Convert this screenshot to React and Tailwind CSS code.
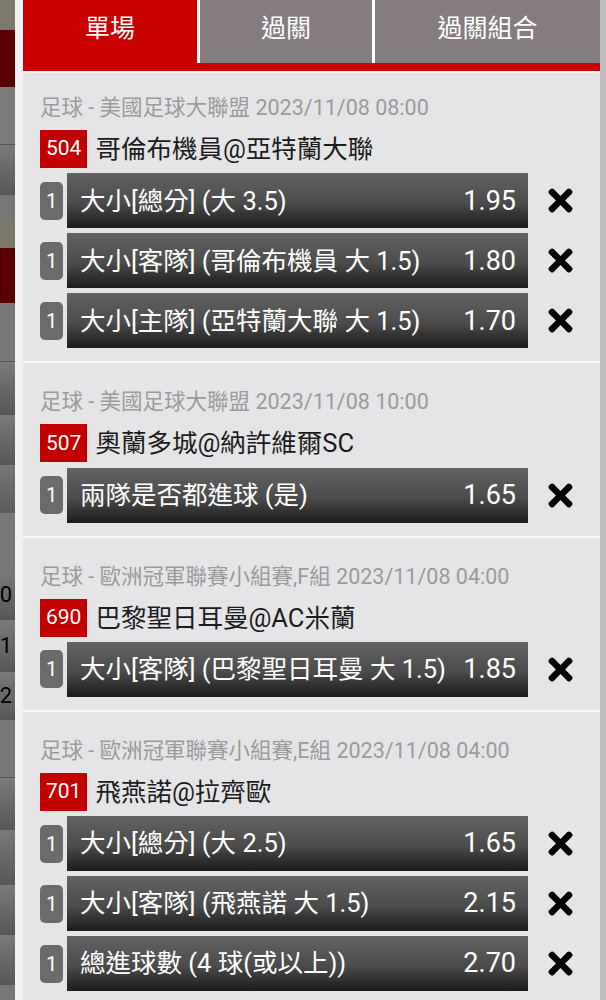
import React from 'react';
import { FaTimes } from 'react-icons/fa';

const sideRows = [
  { h: 'h-[30px]', bg: 'bg-[#7d7a6c]' },
  { h: 'h-[57px]', bg: 'bg-[#5a0202]' },
  { h: 'h-[58px]', bg: 'bg-[#7b7b7b] border-b border-[#555]' },
  { h: 'h-[50px]', bg: 'bg-linear-to-b from-[#7a7a7a] to-[#575757]' },
  { h: 'h-[23px]', bg: 'bg-[#767676]' },
  { h: 'h-[30px]', bg: 'bg-[#7c796a]' },
  { h: 'h-[55px]', bg: 'bg-[#5a0000]' },
  { h: 'h-[59px]', bg: 'bg-[#787878] border-b border-[#555]' },
  { h: 'h-[53px]', bg: 'bg-linear-to-b from-[#7a7a7a] to-[#575757]' },
  { h: 'h-[50px]', bg: 'bg-linear-to-b from-[#7a7a7a] to-[#575757]' },
  { h: 'h-[48px]', bg: 'bg-linear-to-b from-[#777] to-[#5c5c5c]' },
  { h: 'h-[57px]', bg: 'bg-[#777777]' },
  { h: 'h-[50px]', bg: 'bg-linear-to-b from-[#7a7a7a] to-[#575757]', digit: '0' },
  { h: 'h-[52px]', bg: 'bg-linear-to-b from-[#7a7a7a] to-[#575757]', digit: '1' },
  { h: 'h-[48px]', bg: 'bg-linear-to-b from-[#7a7a7a] to-[#575757]', digit: '2' },
  { h: 'h-[58px]', bg: 'bg-[#777777] border-b border-[#555]' },
  { h: 'h-[52px]', bg: 'bg-linear-to-b from-[#7a7a7a] to-[#575757]' },
  { h: 'h-[55px]', bg: 'bg-linear-to-b from-[#7a7a7a] to-[#575757]' },
  { h: 'h-[50px]', bg: 'bg-linear-to-b from-[#7a7a7a] to-[#575757]' },
  { h: 'h-[50px]', bg: 'bg-linear-to-b from-[#7a7a7a] to-[#575757]' },
  { h: 'h-[15px]', bg: 'bg-[#777777]' },
];

const sections = [
  {
    league: '足球 - 美國足球大聯盟 2023/11/08 08:00',
    code: '504',
    match: '哥倫布機員@亞特蘭大聯',
    bets: [
      ['大小[總分] (大 3.5)', '1.95'],
      ['大小[客隊] (哥倫布機員 大 1.5)', '1.80'],
      ['大小[主隊] (亞特蘭大聯 大 1.5)', '1.70'],
    ],
  },
  {
    league: '足球 - 美國足球大聯盟 2023/11/08 10:00',
    code: '507',
    match: '奧蘭多城@納許維爾SC',
    bets: [['兩隊是否都進球 (是)', '1.65']],
  },
  {
    league: '足球 - 歐洲冠軍聯賽小組賽,F組 2023/11/08 04:00',
    code: '690',
    match: '巴黎聖日耳曼@AC米蘭',
    bets: [['大小[客隊] (巴黎聖日耳曼 大 1.5)', '1.85']],
  },
  {
    league: '足球 - 歐洲冠軍聯賽小組賽,E組 2023/11/08 04:00',
    code: '701',
    match: '飛燕諾@拉齊歐',
    bets: [
      ['大小[總分] (大 2.5)', '1.65'],
      ['大小[客隊] (飛燕諾 大 1.5)', '2.15'],
      ['總進球數 (4 球(或以上))', '2.70'],
    ],
  },
];

const BetRow = ({ label, odds }) => (
  <div className="flex items-center shrink-0">
    <div className="w-[23px] h-[38px] rounded-[5px] bg-[#6b6b6b] text-white text-[20px] flex items-center justify-center">
      1
    </div>
    <div className="ml-[4px] w-[461px] h-[55px] flex items-center justify-between pl-[13px] pr-[12px] bg-linear-to-b from-[#636363] via-[#4b4b4b] via-55% to-[#1c1c1c] text-white whitespace-nowrap">
      <span className="text-[25.5px]">{label}</span>
      <span className="text-[27px]">{odds}</span>
    </div>
    <div className="flex-1 flex items-center justify-center pr-[8px]">
      <FaTimes size={35} className="text-black" />
    </div>
  </div>
);

const Section = ({ data, first }) => (
  <div className={`shrink-0 border-t-2 border-[#f7f7f7] pl-[17px] pb-[13px] ${first ? 'pt-[23px]' : 'pt-[27px]'}`}>
    <div className="text-[21.5px] leading-[24px] text-[#9b9b9b] whitespace-nowrap">{data.league}</div>
    <div className="mt-[10px] flex items-center">
      <span className="h-[38px] px-[6px] bg-[#c20000] text-white text-[21px] flex items-center">{data.code}</span>
      <span className="ml-[8px] text-[25.5px] text-[#1c1c1c]">{data.match}</span>
    </div>
    <div className="mt-[5px] flex flex-col gap-[5px]">
      {data.bets.map((b, i) => (
        <BetRow key={i} label={b[0]} odds={b[1]} />
      ))}
    </div>
  </div>
);

export default function App() {
  return (
    <div className="w-[606px] h-[1000px] overflow-hidden flex font-['Roboto','Noto_Sans_CJK_TC',sans-serif]">
      {/* dimmed page behind the slip */}
      <div className="w-[15px] flex flex-col shrink-0">
        {sideRows.map((r, i) => (
          <div key={i} className={`${r.h} ${r.bg} shrink-0 flex items-center justify-end pr-[3px] text-[22px] text-black leading-none`}>
            {r.digit}
          </div>
        ))}
      </div>
      <div className="w-[8px] shrink-0 bg-[#f2f2f2]" />

      {/* bet slip */}
      <div className="flex-1 flex flex-col bg-[#e5e5e7]">
        <div className="shrink-0 flex gap-[3px] bg-white h-[63px]">
          <div className="w-[174px] bg-[#c90000] text-white text-[25px] flex items-center justify-center pb-[6px]">單場</div>
          <div className="w-[172px] bg-[#857c80] text-white text-[25px] flex items-center justify-center pb-[6px]">過關</div>
          <div className="flex-1 bg-[#857c80] text-white text-[25px] flex items-center justify-center pb-[6px]">過關組合</div>
        </div>
        <div className="shrink-0 h-[8px] bg-[#c90000]" />
        {sections.map((s, i) => (
          <Section key={i} data={s} first={i === 0} />
        ))}
      </div>

      <div className="w-[6px] shrink-0 bg-[#bdbdbd]" />
    </div>
  );
}
